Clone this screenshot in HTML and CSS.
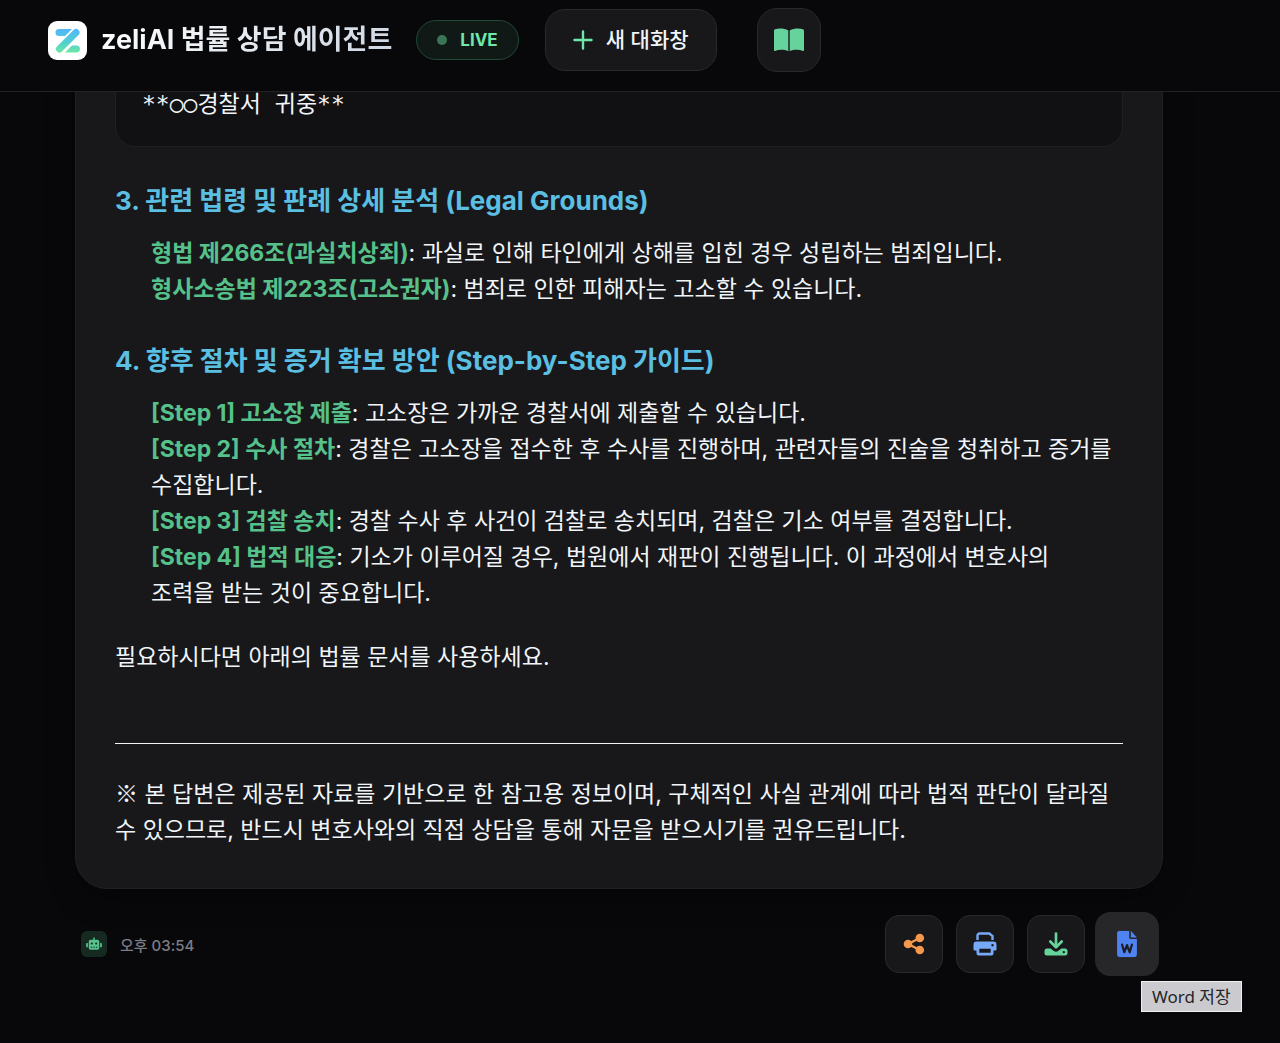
FILE: index.html
```html
<!DOCTYPE html>
<html lang="ko">
<head>
    <meta charset="UTF-8">
    <meta name="viewport" content="width=device-width, initial-scale=1.0">
    <title>zeliAI 법률 상담 에이전트</title>
    <link rel="stylesheet" href="styles.css">
</head>
<body>
    <header class="header">
        <div class="brand">
            <svg class="logo" viewBox="0 0 39 39" aria-hidden="true">
                <defs>
                    <linearGradient id="zGrad" x1="0" y1="8" x2="0" y2="32" gradientUnits="userSpaceOnUse">
                        <stop offset="0" stop-color="#53b5fb"/>
                        <stop offset="0.55" stop-color="#4fd0d0"/>
                        <stop offset="1" stop-color="#6fe8a4"/>
                    </linearGradient>
                </defs>
                <rect width="39" height="39" rx="9" fill="#fff"/>
                <path d="M11 8h13l-7 7h-6a3.500 3.500 0 0 1 0-7zM28.500 31.500H17l7-7h4.500a3.500 3.500 0 0 1 0 7z" fill="url(#zGrad)"/>
                <path d="M11.500 28 28 11.500" fill="none" stroke="#fff" stroke-width="8.500" stroke-linecap="round"/>
                <path d="M11.500 28 28 11.500" fill="none" stroke="url(#zGrad)" stroke-width="7" stroke-linecap="round"/>
            </svg>
            <h1 class="title">zeliAI 법률 상담 에이전트</h1>
        </div>
        <span class="live"><span class="live-dot"></span>LIVE</span>
        <button class="new-chat" type="button">
            <svg class="icon-plus" viewBox="0 0 20 20" aria-hidden="true">
                <path d="M10 1.500v17M1.500 10h17" stroke="currentColor" stroke-width="2.400" stroke-linecap="round"/>
            </svg>
            새 대화창
        </button>
        <button class="book" type="button" aria-label="가이드">
            <svg class="icon-book" viewBox="0 0 30 24" aria-hidden="true">
                <path fill="currentColor" d="M14.300 2.400v20.800C10.500 21.500 5 21.400 1 22.900c-.500.200-1-.100-1-.700V2.700C0 2 .4 1.500 1 1.200 5 .1 10.500.4 14.300 2.400zM15.700 2.400v20.800c3.800-1.700 9.300-1.800 13.300-.3.500.200 1-.1 1-.7V2.700c0-.7-.4-1.200-1-1.500-4-1.100-9.500-.8-13.300 1.200z"/>
            </svg>
        </button>
    </header>

    <main class="chat">
        <article class="message">
            <pre class="code"><code>**○○경찰서 귀중**</code></pre>

            <h2>3. 관련 법령 및 판례 상세 분석 (Legal Grounds)</h2>
            <ul>
                <li><strong>형법 제266조(과실치상죄)</strong>: 과실로 인해 타인에게 상해를 입힌 경우 성립하는 범죄입니다.</li>
                <li><strong>형사소송법 제223조(고소권자)</strong>: 범죄로 인한 피해자는 고소할 수 있습니다.</li>
            </ul>

            <h2>4. 향후 절차 및 증거 확보 방안 (Step-by-Step 가이드)</h2>
            <ul>
                <li><strong>[Step 1] 고소장 제출</strong>: 고소장은 가까운 경찰서에 제출할 수 있습니다.</li>
                <li><strong>[Step 2] 수사 절차</strong>: 경찰은 고소장을 접수한 후 수사를 진행하며, 관련자들의 진술을 청취하고 증거를 수집합니다.</li>
                <li><strong>[Step 3] 검찰 송치</strong>: 경찰 수사 후 사건이 검찰로 송치되며, 검찰은 기소 여부를 결정합니다.</li>
                <li><strong>[Step 4] 법적 대응</strong>: 기소가 이루어질 경우, 법원에서 재판이 진행됩니다. 이 과정에서 변호사의 조력을 받는 것이 중요합니다.</li>
            </ul>

            <p>필요하시다면 아래의 법률 문서를 사용하세요.</p>
            <hr>
            <p><span class="mark">※</span> 본 답변은 제공된 자료를 기반으로 한 참고용 정보이며, 구체적인 사실 관계에 따라 법적 판단이 달라질 수 있으므로, 반드시 변호사와의 직접 상담을 통해 자문을 받으시기를 권유드립니다.</p>
        </article>

        <div class="meta">
            <span class="bot">
                <svg class="icon-bot" viewBox="0 0 18 16" aria-hidden="true">
                    <path fill="currentColor" fill-rule="evenodd" d="M8.200 1a.8.8 0 0 1 1.600 0v2H13a2 2 0 0 1 2 2v7.500a2 2 0 0 1-2 2H5a2 2 0 0 1-2-2V5a2 2 0 0 1 2-2h3.200zM6.500 6.200a1.200 1.200 0 1 0 0 2.400 1.200 1.200 0 0 0 0-2.400zm5 0a1.200 1.200 0 1 0 0 2.400 1.200 1.200 0 0 0 0-2.400zM5.200 11v1.200h1.600V11zm3 0v1.200h1.600V11zm3 0v1.200h1.600V11zM1 6.800h1v5H1a1 1 0 0 1-1-1v-3a1 1 0 0 1 1-1zm15 0h1a1 1 0 0 1 1 1v3a1 1 0 0 1-1 1h-1z"/>
                </svg>
            </span>
            <time class="time" datetime="15:54">오후 03:54</time>

            <div class="actions">
                <button class="action share" type="button" aria-label="공유">
                    <svg viewBox="0 0 24 24" aria-hidden="true">
                        <path d="M18 6 6 12l12 6" fill="none" stroke="currentColor" stroke-width="2.400"/>
                        <circle cx="6" cy="12" r="4.300" fill="currentColor"/>
                        <circle cx="17.800" cy="6" r="4.300" fill="currentColor"/>
                        <circle cx="17.800" cy="18" r="4.300" fill="currentColor"/>
                    </svg>
                </button>
                <button class="action print" type="button" aria-label="인쇄">
                    <svg viewBox="0 0 24 24" aria-hidden="true">
                        <path d="M4.500 8V3.500a2 2 0 0 1 2-2h9.800L19.500 4v4" fill="none" stroke="currentColor" stroke-width="2.400"/>
                        <path fill="currentColor" fill-rule="evenodd" d="M3.500 9.500h17A3 3 0 0 1 23.500 12.500v5a1 1 0 0 1-1 1h-2v3a2 2 0 0 1-2 2h-13a2 2 0 0 1-2-2v-3h-2a1 1 0 0 1-1-1v-5a3 3 0 0 1 3-3zm2.800 7.300v4h11.400v-4zm13.200-4.800a1.200 1.200 0 1 0 0 2.400 1.200 1.200 0 0 0 0-2.400z"/>
                    </svg>
                </button>
                <button class="action download" type="button" aria-label="다운로드">
                    <svg viewBox="0 0 24 24" aria-hidden="true">
                        <path d="M12 1.500v13M6.300 9.500l5.700 5.700 5.700-5.700" fill="none" stroke="currentColor" stroke-width="2.700" stroke-linecap="round" stroke-linejoin="round"/>
                        <path fill="currentColor" fill-rule="evenodd" d="M3 16.500h3.600l3.300 2.400a3.500 3.500 0 0 0 4.200 0l3.300-2.400H21a2.500 2.500 0 0 1 2.500 2.500v2A2.500 2.500 0 0 1 21 23.500H3A2.500 2.500 0 0 1 .5 21v-2A2.500 2.500 0 0 1 3 16.500zm16.800 2.400a1.200 1.200 0 1 0 0 2.400 1.200 1.200 0 0 0 0-2.400z"/>
                    </svg>
                </button>
                <div class="tooltip-wrap">
                    <button class="action word" type="button" aria-label="Word 저장" aria-describedby="wordTip">
                        <svg viewBox="0 0 24 24" aria-hidden="true">
                            <path fill="currentColor" d="M5.500 0H14v6a1.500 1.500 0 0 0 1.500 1.500H21V21a3 3 0 0 1-3 3H6a3 3 0 0 1-3-3V2.500A2.500 2.500 0 0 1 5.500 0zM15.500 0 21 6h-5.500z"/>
                            <path d="m7.500 12.500 2 7 2.500-6.500 2.500 6.500 2-7" fill="none" stroke="#1b1d24" stroke-width="2" stroke-linecap="round" stroke-linejoin="round"/>
                        </svg>
                    </button>
                    <span class="tooltip" id="wordTip" role="tooltip">Word 저장</span>
                </div>
            </div>
        </div>
    </main>
</body>
</html>
```
FILE: styles.css
```css
* {
    margin: 0;
    padding: 0;
    box-sizing: border-box;
}

body {
    display: flex;
    flex-direction: column;
    height: 100vh;
    overflow: hidden;
    font-family: Inter, "Noto Sans CJK KR", sans-serif;
    background-color: #08080a;
    color: #f1f5f9;
    word-break: keep-all;
}

button {
    font-family: inherit;
    color: inherit;
    cursor: pointer;
}

svg {
    display: block;
}

/* Top bar */
.header {
    display: flex;
    align-items: center;
    flex-shrink: 0;
    padding: 8px 48px 19px;
    border-bottom: 1px solid #222224;
}

.brand {
    display: flex;
    align-items: center;
    gap: 14px;
    margin-right: 24px;
}

.logo {
    width: 39px;
    height: 39px;
}

.title {
    font-size: 27px;
    font-weight: 700;
    line-height: 40px;
    white-space: nowrap;
    background: linear-gradient(135deg, #ffffff, #cbd5e1);
    background-clip: text;
    -webkit-background-clip: text;
    color: transparent;
}

.live {
    display: flex;
    align-items: center;
    gap: 13px;
    height: 40px;
    padding: 0 20px;
    margin-right: 26px;
    border: 1px solid #214936;
    border-radius: 20px;
    background-color: #101916;
    color: #6ee7a8;
    font-size: 17px;
    font-weight: 700;
}

.live-dot {
    width: 10px;
    height: 10px;
    border-radius: 50%;
    background-color: #3a7557;
}

.new-chat {
    display: flex;
    align-items: center;
    gap: 13px;
    height: 62px;
    padding: 0 27px;
    margin-right: 40px;
    border: 1px solid #29292b;
    border-radius: 20px;
    background-color: #18181a;
    font-size: 21px;
    font-weight: 500;
    line-height: 28px;
    white-space: nowrap;
}

.icon-plus {
    width: 20px;
    height: 20px;
    color: #6ee7a8;
}

.book {
    display: flex;
    align-items: center;
    justify-content: center;
    width: 64px;
    height: 64px;
    border: 1px solid #29292b;
    border-radius: 20px;
    background-color: #18181a;
}

.icon-book {
    width: 30px;
    height: 24px;
    color: #67d39c;
}

/* Conversation, kept at its latest message */
.chat {
    display: flex;
    flex-direction: column;
    justify-content: flex-end;
    flex: 1;
    min-height: 0;
    overflow: hidden;
    padding: 0 0 70px 75px;
}

.message,
.meta {
    width: 85vw;
    flex-shrink: 0;
}

.message {
    padding: 40px 39px;
    border: 1px solid #222224;
    border-radius: 32px;
    background-color: #18181a;
    box-shadow: 0 10px 30px rgba(0, 0, 0, 0.3);
    font-size: 23px;
    line-height: 36px;
}

.code {
    padding: 24px 26px;
    border: 1px solid #202022;
    border-radius: 20px;
    background-color: #111113;
}

.code code {
    font-family: "DejaVu Sans Mono", "Noto Sans CJK KR", monospace;
    font-size: 23px;
}

.message h2 {
    margin: 36px 0 16px;
    color: #5bbfe2;
    font-size: 26px;
    font-weight: 700;
}

.message ul {
    padding: 0 8px 0 36px;
    list-style: none;
}

.message strong {
    color: #56c18b;
    font-weight: 700;
}

.message ul + p {
    margin-top: 28px;
}

.message hr {
    margin: 68px 0 32px;
    border: none;
    border-top: 1px solid #f1f5f9;
}

.mark {
    font-family: "Noto Sans CJK KR", sans-serif;
    line-height: 1;
}

/* Row below the message */
.meta {
    display: flex;
    align-items: center;
    margin-top: 26px;
    padding: 0 7px 0 6px;
}

.bot {
    display: flex;
    align-items: center;
    justify-content: center;
    width: 26px;
    height: 26px;
    border-radius: 6px;
    background-color: #162a22;
    color: #56c18b;
}

.icon-bot {
    width: 16px;
    height: 14px;
}

.time {
    margin-left: 13px;
    color: #7c7c84;
    font-size: 15px;
    font-weight: 500;
}

.actions {
    display: flex;
    gap: 13px;
    margin-left: auto;
}

.action {
    display: flex;
    align-items: center;
    justify-content: center;
    width: 58px;
    height: 58px;
    border: 1px solid #29292b;
    border-radius: 14px;
    background-color: #18181a;
}

.action svg {
    width: 24px;
    height: 24px;
}

.share {
    color: #f5984c;
}

.print {
    color: #78a9f8;
}

.download {
    color: #67d39c;
}

.word {
    color: #4f83f1;
    border-color: #29292b;
    background-color: #27272a;
    transform: scale(1.1);
}

.tooltip-wrap {
    position: relative;
}

.tooltip {
    position: absolute;
    top: 66px;
    left: 43px;
    padding: 0 10px;
    border: 1px solid #f0f0f2;
    background-color: #cbcbcf;
    color: #242428;
    font-family: "Noto Sans", "Noto Sans CJK KR", sans-serif;
    font-size: 17px;
    line-height: 29px;
    white-space: nowrap;
}
```
